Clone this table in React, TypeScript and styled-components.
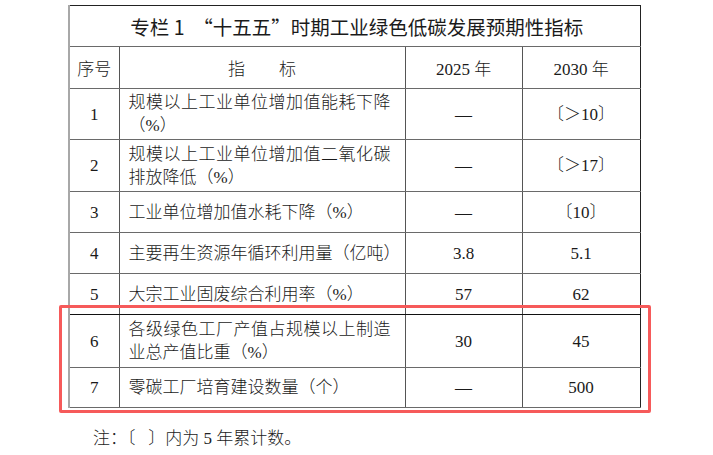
import React from "react";
import styled, { createGlobalStyle } from "styled-components";

const Global = createGlobalStyle`
  html, body { margin: 0; padding: 0; background: #fff; }
  body { font-family: "Liberation Serif", "Noto Sans CJK SC", serif; color: #1a1a1a; }
`;

const Page = styled.div`
  width: 713px;
  height: 455px;
  padding: 5px 0 0 68px;
  box-sizing: border-box;
`;

const TableWrap = styled.div`
  position: relative;
  width: 571px;
`;

const Table = styled.table`
  width: 571px;
  border-collapse: collapse;
  table-layout: fixed;
  border-top: 1px solid #222;
  border-right: 1px solid #222;
  border-bottom: 1px solid #111;
  border-left: 2px solid #a8a8a8;
  font-size: 17px;
  font-weight: 300;
`;

const Row = styled.tr<{ $h: number; $strong?: boolean }>`
  height: ${(p) => p.$h}px;
  & > td, & > th { border-bottom: 1px solid ${(p) => (p.$strong ? "#111" : "#6a6a6a")}; }
`;

const TitleCell = styled.th`
  font-family: "Noto Sans CJK SC", sans-serif;
  font-weight: 400;
  font-size: 19.5px;
  color: #1a1a1a;
  text-align: center;
  vertical-align: middle;
  padding: 0 0 0 4px;
`;

const HeadCell = styled.th<{ $last?: boolean }>`
  font-weight: 300;
  font-size: 17px;
  text-align: center;
  vertical-align: middle;
  padding: 0;
  border-right: ${(p) => (p.$last ? "none" : "1px solid #555")};
`;

const Cell = styled.td<{ $align?: "left" | "center"; $last?: boolean }>`
  text-align: ${(p) => p.$align ?? "center"};
  vertical-align: middle;
  padding: ${(p) => (p.$align === "left" ? "0 14px 0 9px" : "0")};
  line-height: 23px;
  border-right: ${(p) => (p.$last ? "none" : "1px solid #555")};
`;

const Line = styled.span<{ $justify?: boolean }>`
  display: block;
  white-space: nowrap;
  text-align: ${(p) => (p.$justify ? "justify" : "left")};
  text-align-last: ${(p) => (p.$justify ? "justify" : "left")};
  ${(p) => (p.$justify ? "white-space: normal;" : "")}
`;

const Note = styled.div`
  margin: 16px 0 0 25px;
  font-size: 17px;
  font-weight: 300;
  color: #222;
`;

const Highlight = styled.div`
  position: absolute;
  left: -9px;
  top: 300px;
  width: 586px;
  height: 102px;
  border: 3px solid #f65a5a;
  border-radius: 2px;
  pointer-events: none;
`;

type Item = { no: string; lines: string[]; y25: string; y30: string; h: number };

const items: Item[] = [
  { no: "1", lines: ["规模以上工业单位增加值能耗下降", "（%）"], y25: "—", y30: "〔＞10〕", h: 51 },
  { no: "2", lines: ["规模以上工业单位增加值二氧化碳", "排放降低（%）"], y25: "—", y30: "〔＞17〕", h: 52 },
  { no: "3", lines: ["工业单位增加值水耗下降（%）"], y25: "—", y30: "〔10〕", h: 41 },
  { no: "4", lines: ["主要再生资源年循环利用量（亿吨）"], y25: "3.8", y30: "5.1", h: 41 },
  { no: "5", lines: ["大宗工业固废综合利用率（%）"], y25: "57", y30: "62", h: 41 },
  { no: "6", lines: ["各级绿色工厂产值占规模以上制造", "业总产值比重（%）"], y25: "30", y30: "45", h: 53 },
  { no: "7", lines: ["零碳工厂培育建设数量（个）"], y25: "—", y30: "500", h: 40 },
];

export default function App() {
  return (
    <>
      <Global />
      <Page>
        <TableWrap>
          <Table>
            <colgroup>
              <col style={{ width: 50 }} />
              <col style={{ width: 286 }} />
              <col style={{ width: 117 }} />
              <col style={{ width: 118 }} />
            </colgroup>
            <thead>
              <Row $h={41}>
                <TitleCell colSpan={4}>专栏 1&nbsp;&nbsp;“十五五”时期工业绿色低碳发展预期性指标</TitleCell>
              </Row>
              <Row $h={42}>
                <HeadCell>序号</HeadCell>
                <HeadCell>指　　标</HeadCell>
                <HeadCell>2025 年</HeadCell>
                <HeadCell $last>2030 年</HeadCell>
              </Row>
            </thead>
            <tbody>
              {items.map((it, i) => (
                <Row key={it.no} $h={it.h} $strong={i === 4}>
                  <Cell>{it.no}</Cell>
                  <Cell $align="left">
                    {it.lines.map((l, j) => (
                      <Line key={j} $justify={it.lines.length > 1 && j === 0}>
                        {l}
                      </Line>
                    ))}
                  </Cell>
                  <Cell>{it.y25}</Cell>
                  <Cell $last>{it.y30}</Cell>
                </Row>
              ))}
            </tbody>
          </Table>
          <Highlight />
        </TableWrap>
        <Note>注：〔&nbsp;&nbsp;&nbsp;〕内为 5 年累计数。</Note>
      </Page>
    </>
  );
}
